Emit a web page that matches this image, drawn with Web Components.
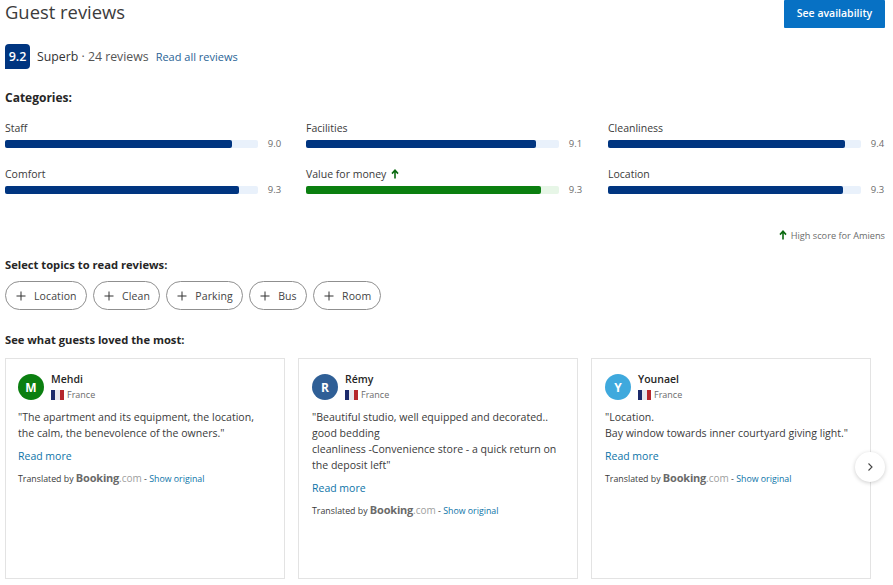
<!DOCTYPE html>
<html lang="en">
<head>
<meta charset="utf-8">
<title>Guest reviews</title>
<style>
  html, body { margin: 0; background: #fff; }
  body { font-family: "Open Sans", "Noto Sans", sans-serif; color: #262626; width: 893px; height: 585px; overflow: hidden; }
</style>
</head>
<body>
<guest-reviews></guest-reviews>

<script>
// Single score bar with its label and number
class ScoreBar extends HTMLElement {
	connectedCallback() {
		const label = this.getAttribute('label');
		const score = this.getAttribute('score');
		const fill = this.getAttribute('fill');
		const high = this.hasAttribute('high');
		this.attachShadow({ mode: 'open' });
		this.shadowRoot.innerHTML = `
      <style>
        :host { display: block; height: 46px; }
        .label { display: flex; align-items: center; gap: 5px; height: 16px; font-size: 10.5px; line-height: 16px; color: #3a3a3a; }
        .row { display: flex; align-items: center; justify-content: space-between; width: 276.2px; margin-top: 1px; }
        .track { width: 252.5px; height: 8px; border-radius: 2px; background: ${high ? '#e7f6e7' : '#e9f1fb'}; }
        .fill { width: ${fill}px; height: 8px; border-radius: 2px; background: ${high ? '#0b7f10' : '#003580'}; }
        .score { font-size: 9.5px; color: #6b6b6b; }
      </style>
      <div class="label">${label}${high ? '<up-arrow></up-arrow>' : ''}</div>
      <div class="row"><div class="track"><div class="fill"></div></div><span class="score">${score}</span></div>
    `;
	}
}

class UpArrow extends HTMLElement {
	constructor() {
		super();
		this.attachShadow({ mode: 'open' });
		this.shadowRoot.innerHTML = `
      <style>:host { display: inline-flex; } svg { display: block; }</style>
      <svg width="8" height="10" viewBox="0 0 8 10"><path d="M4 9.5V2M1 4.6 4 1.2l3 3.4" fill="none" stroke="#0b6a10" stroke-width="1.6"/></svg>
    `;
	}
}

class TopicChip extends HTMLElement {
	constructor() {
		super();
		this.attachShadow({ mode: 'open' });
		this.shadowRoot.innerHTML = `
      <style>
        :host { display: inline-flex; align-items: center; box-sizing: border-box; height: 29px; padding: 0 9px 0 10px; gap: 8px; border: 1px solid #8f8f8f; border-radius: 15px; font-size: 10.5px; color: #444; letter-spacing: 0.1px; }
        svg { display: block; }
      </style>
      <svg width="10" height="10" viewBox="0 0 10 10"><path d="M5 .5v9M.5 5h9" stroke="#333" stroke-width="1"/></svg>
      <slot></slot>
    `;
	}
}

// Review card: avatar, name, country, quote and translated-by line
class ReviewCard extends HTMLElement {
	connectedCallback() {
		const name = this.getAttribute('name');
		const color = this.getAttribute('color');
		this.attachShadow({ mode: 'open' });
		this.shadowRoot.innerHTML = `
      <style>
        :host { display: block; box-sizing: border-box; width: 280px; height: 221px; padding: 12px 12px 0 12px; border: 1px solid #e3e3e3; background: #fff; }
        :host(:not(:first-child)) { padding-left: 13px; }
        .head { display: flex; gap: 7px; }
        .avatar { width: 26px; height: 26px; margin-top: 3px; border-radius: 50%; background: ${color}; color: #fff; font-size: 12px; font-weight: 700; display: flex; align-items: center; justify-content: center; }
        .name { font-size: 10.5px; font-weight: 600; line-height: 16px; color: #262626; }
        .country { display: flex; align-items: center; gap: 3px; font-size: 9px; line-height: 16px; color: #6b6b6b; }
        .flag { display: flex; width: 13px; height: 10px; }
        .flag i { flex: 1; }
        .quote { margin-top: 6px; font-size: 10.55px; line-height: 16px; color: #3a3a3a; white-space: pre-line; }
        .more { margin-top: 7px; font-size: 10.5px; line-height: 16px; color: #0e74a8; }
        .credit { margin-top: 6px; font-size: 8.8px; line-height: 16px; color: #3a3a3a; white-space: nowrap; }
        .credit b { font-size: 11px; color: #6a6a6a; letter-spacing: -0.2px; }
        .credit em { font-style: normal; font-size: 10px; color: #a0a0a0; }
        .credit span { color: #0e74a8; }
      </style>
      <div class="head">
        <div class="avatar">${name[0]}</div>
        <div>
          <div class="name">${name}</div>
          <div class="country"><div class="flag"><i style="background:#1c2a6b"></i><i style="background:#e8e8ee"></i><i style="background:#b5262c"></i></div>France</div>
        </div>
      </div>
      <div class="quote"><slot></slot></div>
      <div class="more">Read more</div>
      <div class="credit">Translated by <b>Booking</b><em>.com</em> - <span>Show original</span></div>
    `;
	}
}

class GuestReviews extends HTMLElement {
	constructor() {
		super();
		this.attachShadow({ mode: 'open' });
		this.shadowRoot.innerHTML = `
      <style>
        :host { display: block; box-sizing: border-box; width: 893px; height: 585px; padding: 0 8px 0 5px; }
        .top { display: flex; justify-content: space-between; height: 28px; }
        h2 { margin: 0; font-size: 18.4px; font-weight: 400; line-height: 24px; color: #3b3b3b; }
        .cta { box-sizing: border-box; width: 101px; height: 28px; padding-bottom: 2px; background: #0771c4; color: #fff; font-size: 10.5px; font-weight: 600; display: flex; align-items: center; justify-content: center; border-radius: 1px; }
        .rating { display: flex; align-items: center; height: 25px; margin-top: 16px; font-size: 12.3px; color: #555; }
        .badge { width: 25px; height: 25px; border-radius: 4px 4px 4px 0; background: #003580; color: #fff; font-size: 12.5px; font-weight: 600; display: flex; align-items: center; justify-content: center; margin-right: 7px; }
        .rating strong { font-weight: 400; color: #333; }
        .rating a { margin-left: 7px; font-size: 11px; color: #2a6496; }
        h3 { margin: 0; font-size: 11.2px; font-weight: 700; line-height: 16px; color: #262626; }
        .cats { margin-top: 21px; font-size: 12px; }
        .bars { display: grid; grid-template-columns: 301px 302px 277px; margin-top: 14px; }
        .note { display: flex; justify-content: flex-end; align-items: center; gap: 4px; margin-top: 16px; height: 14px; font-size: 9.2px; color: #6b6b6b; }
        .topics { margin-top: 15px; }
        .chips { display: flex; gap: 6.4px; margin-top: 8px; }
        .loved { margin-top: 22px; }
        .cards { position: relative; display: flex; gap: 13px; margin-top: 10px; }
        .next { position: absolute; left: 850px; top: 94px; width: 30px; height: 30px; border-radius: 50%; background: #fff; box-shadow: 0 1px 4px rgba(0,0,0,.2); display: flex; align-items: center; justify-content: center; }
        svg { display: block; }
      </style>
      <div class="top">
        <h2>Guest reviews</h2>
        <div class="cta">See availability</div>
      </div>
      <div class="rating">
        <div class="badge">9.2</div>
        <span><strong>Superb</strong> · 24 reviews</span>
        <a>Read all reviews</a>
      </div>
      <h3 class="cats">Categories:</h3>
      <div class="bars">
        <score-bar label="Staff" score="9.0" fill="227"></score-bar>
        <score-bar label="Facilities" score="9.1" fill="230"></score-bar>
        <score-bar label="Cleanliness" score="9.4" fill="237"></score-bar>
        <score-bar label="Comfort" score="9.3" fill="234"></score-bar>
        <score-bar label="Value for money" score="9.3" fill="235" high></score-bar>
        <score-bar label="Location" score="9.3" fill="235"></score-bar>
      </div>
      <div class="note"><up-arrow></up-arrow>High score for Amiens</div>
      <h3 class="topics">Select topics to read reviews:</h3>
      <div class="chips">
        <topic-chip>Location</topic-chip>
        <topic-chip>Clean</topic-chip>
        <topic-chip>Parking</topic-chip>
        <topic-chip>Bus</topic-chip>
        <topic-chip>Room</topic-chip>
      </div>
      <h3 class="loved">See what guests loved the most:</h3>
      <div class="cards">
        <review-card name="Mehdi" color="#0b7f10">"The apartment and its equipment, the location,
the calm, the benevolence of the owners."</review-card>
        <review-card name="Rémy" color="#2f5f96">"Beautiful studio, well equipped and decorated..
good bedding
cleanliness -Convenience store - a quick return on
the deposit left"</review-card>
        <review-card name="Younael" color="#3fa9dd">"Location.
Bay window towards inner courtyard giving light."</review-card>
        <div class="next"><svg width="8" height="10" viewBox="0 0 8 10"><path d="M2.5 1.5 6 5 2.5 8.5" fill="none" stroke="#444" stroke-width="1.1"/></svg></div>
      </div>
    `;
	}
}

customElements.define('up-arrow', UpArrow);
customElements.define('score-bar', ScoreBar);
customElements.define('topic-chip', TopicChip);
customElements.define('review-card', ReviewCard);
customElements.define('guest-reviews', GuestReviews);
</script>
</body>
</html>
